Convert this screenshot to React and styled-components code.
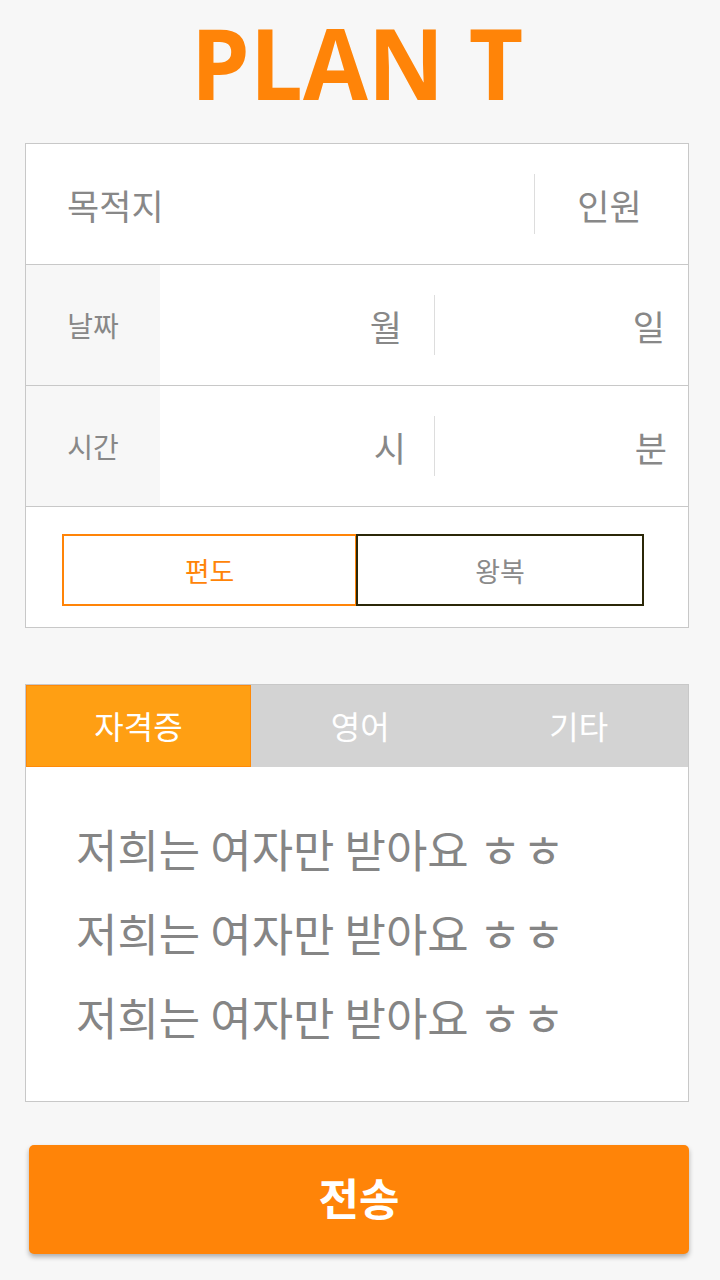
import React, { useState } from "react";
import styled, { createGlobalStyle } from "styled-components";

const GlobalStyle = createGlobalStyle`
  body {
    margin: 0;
    background: #f7f7f7;
    font-family: "Noto Sans CJK KR", "Noto Sans", sans-serif;
  }
`;

const Page = styled.div`
  width: 720px;
  height: 1280px;
  box-sizing: border-box;
  padding: 0 31px 0 25px;
  display: flex;
  flex-direction: column;
`;

const Title = styled.h1`
  margin: 0;
  height: 143px;
  box-sizing: border-box;
  padding-bottom: 18px;
  display: flex;
  align-items: center;
  justify-content: center;
  font-family: "Open Sans", "Roboto", sans-serif;
  font-weight: 700;
  font-size: 98px;
  line-height: 1.1;
  color: #ff8408;
  transform: scaleX(0.96);
`;

const Card = styled.div`
  background: #fff;
  border: 1px solid #c8c8c8;
`;

const Row = styled.div`
  display: flex;
  align-items: stretch;
  height: 120px;
  border-top: ${(p) => (p.first ? "none" : "1px solid #c8c8c8")};
`;

const MainField = styled.div`
  flex: 1;
  display: flex;
  align-items: center;
  padding-left: 41px;
  font-size: 35px;
  color: #888;
`;

const Divider = styled.div`
  width: 1px;
  height: 60px;
  align-self: center;
  background: #ddd;
`;

const CountField = styled.div`
  width: 153px;
  display: flex;
  align-items: center;
  justify-content: center;
  padding-right: 4px;
  box-sizing: border-box;
  font-size: 35px;
  color: #888;
`;

const Label = styled.div`
  width: 134px;
  background: #f7f7f7;
  display: flex;
  align-items: center;
  justify-content: center;
  font-size: 28px;
  color: #888;
`;

const Unit = styled.div`
  width: ${(p) => p.w}px;
  display: flex;
  align-items: center;
  justify-content: flex-end;
  padding-right: ${(p) => p.pr}px;
  box-sizing: border-box;
  font-size: 35px;
  color: #888;
`;

const TripRow = styled.div`
  display: flex;
  height: 121px;
  box-sizing: border-box;
  padding: 27px 44px 22px 36px;
  border-top: 1px solid #c8c8c8;
`;

const TripButton = styled.button`
  flex: ${(p) => (p.active ? "0 0 295px" : "1")};
  height: 72px;
  background: #fff;
  border: 2px solid ${(p) => (p.active ? "#ff8408" : "#2b2708")};
  margin-left: ${(p) => (p.active ? "0" : "-1px")};
  color: ${(p) => (p.active ? "#ff8408" : "#8a8a8a")};
  font-family: inherit;
  font-size: 27px;
  cursor: pointer;
  padding: 0;
`;

const TabCard = styled(Card)`
  margin-top: 56px;
`;

const TabBar = styled.div`
  display: flex;
  height: 82px;
  background: #d3d3d3;
`;

const Tab = styled.div`
  width: ${(p) => (p.active ? "225px" : "auto")};
  flex: ${(p) => (p.active ? "none" : "1")};
  box-sizing: border-box;
  display: flex;
  align-items: center;
  justify-content: center;
  padding-bottom: 3px;
  background: ${(p) => (p.active ? "#ff9f13" : "transparent")};
  border: ${(p) => (p.active ? "1px solid #ff8a08" : "none")};
  color: #fff;
  font-size: 32px;
  cursor: pointer;
`;

const Content = styled.div`
  height: 334px;
  box-sizing: border-box;
  padding: 39px 0 0 50px;
`;

const Line = styled.p`
  margin: 0;
  height: 84px;
  line-height: 84px;
  font-size: 45px;
  color: #858585;
  white-space: nowrap;
`;

const Jamo = styled.span`
  font-size: 46px;
  letter-spacing: 1px;
`;

const Submit = styled.button`
  margin: 43px 0 0 4px;
  height: 109px;
  padding: 0 0 6px;
  background: #ff8408;
  border: none;
  border-radius: 5px;
  box-shadow: 0 3px 5px rgba(0, 0, 0, 0.3);
  color: #fff;
  font-family: inherit;
  font-weight: 700;
  font-size: 44px;
  cursor: pointer;
`;

const tabs = ["자격증", "영어", "기타"];

export default function App() {
  const [trip, setTrip] = useState(0);
  const [tab, setTab] = useState(0);

  return (
    <Page>
      <GlobalStyle />
      <Title>PLAN T</Title>
      <Card>
        <Row first>
          <MainField>목적지</MainField>
          <Divider />
          <CountField>인원</CountField>
        </Row>
        <Row>
          <Label>날짜</Label>
          <Unit w={274} pr={32}>월</Unit>
          <Divider />
          <Unit w={253} pr={23}>일</Unit>
        </Row>
        <Row>
          <Label>시간</Label>
          <Unit w={274} pr={28}>시</Unit>
          <Divider />
          <Unit w={253} pr={21}>분</Unit>
        </Row>
        <TripRow>
          {["편도", "왕복"].map((t, i) => (
            <TripButton key={t} active={trip === i} onClick={() => setTrip(i)}>
              {t}
            </TripButton>
          ))}
        </TripRow>
      </Card>
      <TabCard>
        <TabBar>
          {tabs.map((t, i) => (
            <Tab key={t} active={tab === i} onClick={() => setTab(i)}>
              {t}
            </Tab>
          ))}
        </TabBar>
        <Content>
          {[0, 1, 2].map((i) => (
            <Line key={i}>
              저희는 여자만 받아요 <Jamo>ㅎㅎ</Jamo>
            </Line>
          ))}
        </Content>
      </TabCard>
      <Submit>전송</Submit>
    </Page>
  );
}
